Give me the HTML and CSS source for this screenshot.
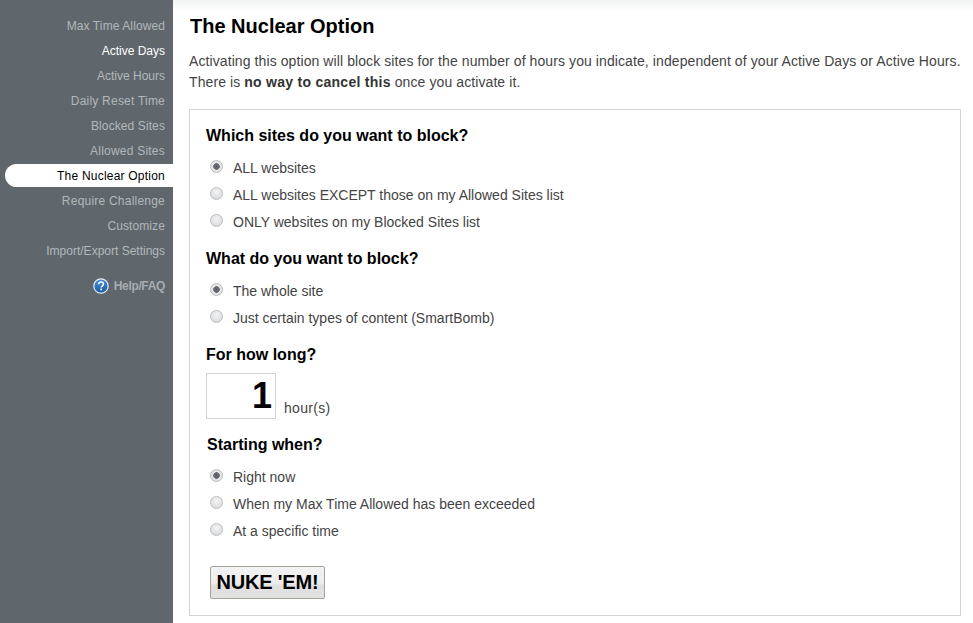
FILE: index.html
```html
<!DOCTYPE html>
<html lang="en">
<head>
<meta charset="utf-8">
<title>The Nuclear Option</title>
<link rel="stylesheet" href="styles.css">
</head>
<body>
<div class="page">
  <nav class="sidebar">
    <a class="nav-item">Max Time Allowed</a>
    <a class="nav-item nav-bright">Active Days</a>
    <a class="nav-item nav-tight">Active Hours</a>
    <a class="nav-item nav-wide">Daily Reset Time</a>
    <a class="nav-item">Blocked Sites</a>
    <a class="nav-item nav-wide">Allowed Sites</a>
    <a class="nav-item nav-active">The Nuclear Option</a>
    <a class="nav-item nav-wide">Require Challenge</a>
    <a class="nav-item">Customize</a>
    <a class="nav-item nav-tight">Import/Export Settings</a>
    <a class="help">
      <svg class="help-icon" viewBox="0 0 16 16" width="16" height="16" aria-hidden="true">
        <defs>
          <linearGradient id="helpFill" x1="0" y1="0" x2="0" y2="1">
            <stop offset="0" stop-color="#4f93dc"/>
            <stop offset="1" stop-color="#14589f"/>
          </linearGradient>
        </defs>
        <circle cx="8" cy="8" r="7.2" fill="url(#helpFill)" stroke="#e8eef4" stroke-width="1.2"/>
        <path d="M5.6 6.3C5.7 4.9 6.7 4.1 8 4.1c1.4 0 2.4.8 2.4 2 0 1-.6 1.5-1.3 2-.6.4-.9.7-.9 1.4" fill="none" stroke="#fff" stroke-width="1.5"/>
        <rect x="7.3" y="10.6" width="1.7" height="1.7" fill="#fff"/>
      </svg>
      <span>Help/FAQ</span>
    </a>
  </nav>
  <main class="main">
    <h1 class="title">The Nuclear Option</h1>
    <p class="intro">Activating this option will block sites for the number of hours you indicate, independent of your Active Days or Active Hours.<br>There is <b>no way to cancel this</b> once you activate it.</p>
    <section class="panel">
      <h2 class="q q-first">Which sites do you want to block?</h2>
      <div class="opt"><span class="radio radio-on"></span><span>ALL websites</span></div>
      <div class="opt"><span class="radio"></span><span>ALL websites EXCEPT those on my Allowed Sites list</span></div>
      <div class="opt"><span class="radio"></span><span>ONLY websites on my Blocked Sites list</span></div>
      <h2 class="q q-second">What do you want to block?</h2>
      <div class="opt"><span class="radio radio-on"></span><span>The whole site</span></div>
      <div class="opt"><span class="radio"></span><span>Just certain types of content (SmartBomb)</span></div>
      <h2 class="q q-third">For how long?</h2>
      <div class="duration">
        <div class="hours">1</div>
        <span class="unit">hour(s)</span>
      </div>
      <h2 class="q q-fourth">Starting when?</h2>
      <div class="opt"><span class="radio radio-on"></span><span>Right now</span></div>
      <div class="opt"><span class="radio"></span><span>When my Max Time Allowed has been exceeded</span></div>
      <div class="opt"><span class="radio"></span><span>At a specific time</span></div>
      <button class="nuke" type="button">NUKE 'EM!</button>
    </section>
  </main>
</div>
</body>
</html>
```
FILE: styles.css
```css
* { box-sizing: border-box; }
html, body { margin: 0; height: 100%; overflow: hidden; }
body {
  font-family: "Liberation Sans", Arial, sans-serif;
  background: #fff;
  color: #444;
}
.page { display: flex; width: 973px; height: 623px; }

.sidebar {
  flex: none;
  width: 173px;
  background: #5f676c;
  padding-top: 14px;
  display: flex;
  flex-direction: column;
}
.nav-item {
  display: block;
  height: 25px;
  line-height: 25px;
  padding-right: 8px;
  text-align: right;
  font-size: 12px;
  letter-spacing: 0.1px;
  color: #b2b7bb;
  white-space: nowrap;
}
.nav-tight { letter-spacing: 0; }
.nav-wide { letter-spacing: 0.22px; }
.nav-bright { color: #fff; letter-spacing: 0; }
.nav-active {
  margin-left: 5px;
  height: 23px;
  line-height: 25px;
  margin-bottom: 2px;
  background: #fff;
  color: #000;
  letter-spacing: 0.22px;
  border-radius: 12px 0 0 12px;
}
.help {
  display: flex;
  justify-content: flex-end;
  align-items: center;
  gap: 5px;
  margin-top: 13px;
  height: 18px;
  padding-right: 8px;
  font-size: 12px;
  font-weight: bold;
  letter-spacing: -0.35px;
  color: #a6adb2;
}
.help-icon { flex: none; }

.main {
  flex: 1;
  min-width: 0;
  padding: 15px 12px 0 16px;
  background: linear-gradient(#f2f3f3 0, #fff 11px);
}
.title {
  margin: 0 0 0 1px;
  font-size: 20px;
  line-height: 23px;
  font-weight: bold;
  color: #000;
}
.intro {
  margin: 13px 0 0;
  font-size: 14px;
  line-height: 21px;
  letter-spacing: 0.09px;
  color: #444;
  white-space: nowrap;
}
.intro b { color: #333; letter-spacing: 0.27px; }
.panel {
  margin-top: 16px;
  height: 507px;
  border: 1px solid #d4d4d4;
  padding: 0 16px;
}
.q {
  margin: 0;
  font-size: 16px;
  line-height: 20px;
  font-weight: bold;
  color: #000;
}
.q-first { padding-top: 16px; height: 36px; margin-bottom: 9px; }
.q-second { margin-top: 13px; margin-bottom: 9px; }
.q-third { margin-top: 13px; margin-bottom: 8px; }
.q-fourth { margin: 16px 0 9px 1px; }
.opt {
  display: flex;
  align-items: center;
  height: 27px;
  padding-bottom: 2px;
  font-size: 14px;
  color: #444;
  white-space: nowrap;
}
.radio {
  flex: none;
  position: relative;
  top: -1px;
  width: 13px;
  height: 13px;
  margin: 0 10px 0 4px;
  border-radius: 50%;
  border: 1px solid #b9bcbe;
  background: radial-gradient(circle at 50% 35%, #f4f4f4 0, #dcdddf 75%);
}
.radio-on {
  background: radial-gradient(circle, #5c6066 0, #6c7075 3px, #e6e7e8 3.6px, #dcdddf 100%);
}
.duration { display: flex; align-items: flex-end; }
.hours {
  width: 70px;
  height: 46px;
  border: 1px solid #d4d4d4;
  padding-right: 3px;
  text-align: right;
  font-size: 36px;
  font-weight: bold;
  line-height: 43px;
  color: #000;
}
.unit { margin-left: 8px; font-size: 14px; line-height: 20px; letter-spacing: 0.3px; color: #444; position: relative; top: -1px; }
.nuke {
  display: block;
  margin: 21px 0 0 4px;
  width: 115px;
  height: 33px;
  padding: 0;
  border: 1px solid #a5a29c;
  border-radius: 2px;
  background: linear-gradient(#f3f3f3 0, #ececec 55%, #dfdfdf 58%, #e2e2e2 100%);
  font-family: "Liberation Sans", Arial, sans-serif;
  font-size: 20px;
  font-weight: bold;
  letter-spacing: -0.2px;
  color: #000;
}
```
